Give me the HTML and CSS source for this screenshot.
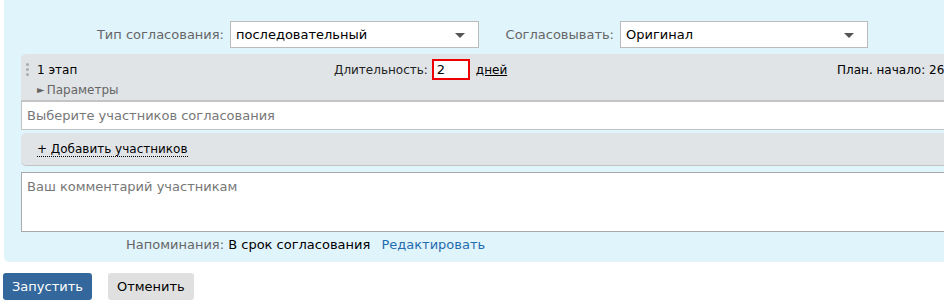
FILE: index.html
```html
<!DOCTYPE html>
<html lang="ru">
<head>
    <meta charset="UTF-8">
    <title>Согласование</title>
    <link rel="stylesheet" href="styles.css">
</head>
<body>
    <div class="panel">
        <div class="top-row">
            <label class="field-label label-type">Тип согласования:</label>
            <div class="select select-type">последовательный<span class="caret"></span></div>
            <label class="field-label label-what">Согласовывать:</label>
            <div class="select select-what">Оригинал<span class="caret"></span></div>
        </div>

        <div class="stage">
            <div class="stage-head">
                <span class="handle"><i></i><i></i><i></i></span>
                <span class="stage-name">1 этап</span>
                <span class="duration">
                    <span class="muted-dark">Длительность:</span>
                    <span class="days-input">2</span>
                    <a href="#" class="days">дней</a>
                </span>
                <span class="plan">План. начало: 26.03.2024</span>
            </div>
            <div class="params"><span class="arrow">&#9658;</span>Параметры</div>
        </div>

        <div class="participants">Выберите участников согласования</div>

        <div class="add-row">
            <a href="#" class="add-link">+ Добавить участников</a>
        </div>

        <div class="comment">Ваш комментарий участникам</div>

        <div class="reminder">
            <span class="muted">Напоминания:</span>
            <span>В срок согласования</span>
            <a href="#" class="edit">Редактировать</a>
        </div>
    </div>

    <div class="actions">
        <button class="btn btn-primary">Запустить</button>
        <button class="btn">Отменить</button>
    </div>
</body>
</html>
```

FILE: styles.css
```css
body {
    font-family: 'DejaVu Sans', Verdana, sans-serif;
    font-size: 13px;
    margin: 0;
    padding: 0;
    background: #fff;
    color: #000;
    overflow: hidden;
}
a {
    color: inherit;
    text-decoration: none;
}
.panel {
    margin-left: 4px;
    width: 1000px;
    height: 262px;
    box-sizing: border-box;
    padding-top: 21px;
    background: #e0f4fc;
    border-radius: 0 0 0 5px;
}
.top-row {
    display: flex;
    align-items: center;
    height: 27px;
}
.field-label {
    color: #666;
    text-align: right;
    padding-right: 6px;
    box-sizing: border-box;
}
.label-type {
    width: 226px;
}
.label-what {
    width: 141px;
}
.select {
    position: relative;
    height: 27px;
    line-height: 25px;
    box-sizing: border-box;
    border: 1px solid #bbb;
    background: #fff;
    padding-left: 5px;
    color: #000;
}
.select-type {
    width: 249px;
}
.select-what {
    width: 248px;
}
.caret {
    position: absolute;
    right: 13px;
    top: 11px;
    width: 0;
    height: 0;
    border-left: 5px solid transparent;
    border-right: 5px solid transparent;
    border-top: 5px solid #555;
}
.stage {
    margin: 6px 0 0 17px;
    height: 48px;
    box-sizing: border-box;
    background: #e1e4e7;
    border-radius: 5px 0 0 0;
    border-bottom: 2px solid #c4c4c4;
    padding-top: 5px;
}
.stage-head {
    display: flex;
    align-items: center;
    height: 21px;
}
.handle {
    display: flex;
    flex-direction: column;
    gap: 2px;
    width: 16px;
    padding-left: 5px;
    box-sizing: border-box;
}
.handle i {
    display: block;
    width: 3px;
    height: 3px;
    border-radius: 50%;
    background: #aaa;
}
.stage-name {
    width: 297px;
    font-size: 12px;
}
.duration {
    display: flex;
    align-items: center;
    width: 503px;
    font-size: 12px;
}
.muted-dark {
    color: #222;
}
.days-input {
    width: 38px;
    height: 21px;
    box-sizing: border-box;
    margin-left: 4px;
    border: 2px solid #e00;
    background: #fff;
    line-height: 17px;
    padding-left: 3px;
    font-size: 13px;
}
.days {
    margin-left: 6px;
    text-decoration: underline;
}
.plan {
    font-size: 12px;
    white-space: nowrap;
}
.params {
    margin: 2px 0 0 16px;
    color: #666;
    font-size: 12px;
    line-height: 16px;
}
.arrow {
    font-size: 10px;
    margin-right: 2px;
    vertical-align: 1px;
}
.participants {
    margin-left: 17px;
    height: 28px;
    box-sizing: border-box;
    background: #fff;
    border: 1px solid #c4c4c4;
    border-top: none;
    padding-left: 5px;
    line-height: 27px;
    color: #777;
}
.add-row {
    margin: 3px 0 0 17px;
    height: 33px;
    box-sizing: border-box;
    background: #e1e4e7;
    border-radius: 5px 0 0 5px;
    border-bottom: 1px solid #c4c4c4;
    padding-left: 16px;
    line-height: 31px;
}
.add-link {
    border-bottom: 1px dotted #000;
    line-height: 14px;
    display: inline-block;
    font-size: 12px;
}
.comment {
    margin: 6px 0 0 17px;
    height: 60px;
    box-sizing: border-box;
    background: #fff;
    border: 1px solid #aaa;
    padding: 6px 5px;
    color: #777;
}
.reminder {
    margin: 5px 0 0 122px;
    line-height: 16px;
}
.muted {
    color: #666;
}
.edit {
    margin-left: 7px;
    color: #1f6cb0;
}
.actions {
    display: flex;
    gap: 16px;
    margin: 11px 0 0 3px;
}
.btn {
    font-family: inherit;
    font-size: 13px;
    height: 27px;
    padding: 0 9px;
    border: none;
    border-radius: 3px;
    background: #e0e0e0;
    color: #000;
    cursor: pointer;
}
.btn-primary {
    background: #34679b;
    color: #fff;
}
```
